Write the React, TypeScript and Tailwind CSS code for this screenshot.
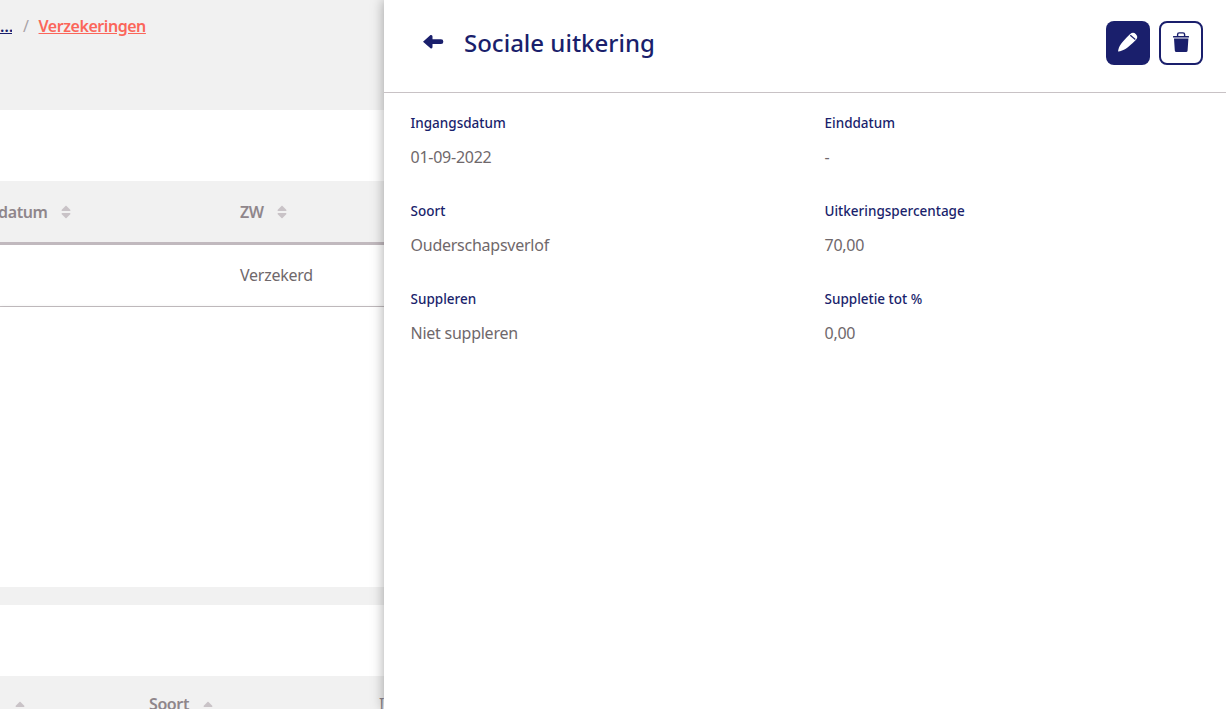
import { FaSort } from "react-icons/fa";

const font = { fontFamily: '"Noto Sans", sans-serif' };

function Field({ label, value }: { label: string; value: string }) {
  return (
    <div className="h-[88px]">
      <div className="h-[24px] text-[13.5px] leading-[24px] font-medium text-[#1a1f6c]">{label}</div>
      <div className="mt-[10px] h-[24px] text-[16px] leading-[24px] tracking-[-0.25px] text-[#6f686b]">{value}</div>
    </div>
  );
}

function SortIcon() {
  return <FaSort className="h-[16px] w-[10px] shrink-0 text-[#c9c3c7]" />;
}

function HeadCell({ label, className }: { label: string; className: string }) {
  return (
    <div className={`flex items-center gap-[13px] text-[16px] leading-[22px] font-semibold tracking-[-0.4px] text-[#8f868b] ${className}`}>
      <span>{label}</span>
      <SortIcon />
    </div>
  );
}

export default function App() {
  return (
    <div style={font} className="flex h-[709px] w-[1226px] overflow-hidden bg-white">
      <div className="flex w-[384px] shrink-0 flex-col overflow-hidden">
        <div className="flex h-[110px] shrink-0 items-start bg-[#f1f1f1] pt-[14px] text-[16px] leading-[24px] tracking-[-0.45px]">
          <a className="w-[12px] overflow-hidden font-semibold text-[#1a1f6c] underline">…</a>
          <span className="ml-[11px] text-[#a9a3a7]">/</span>
          <a className="ml-[10px] font-semibold text-[#fb665a] underline">Verzekeringen</a>
        </div>
        <div className="h-[71px] shrink-0" />
        <div className="flex h-[61px] shrink-0 items-center bg-[#f1f1f1]">
          <HeadCell label="Einddatum" className="ml-[-34px] w-[274px]" />
          <HeadCell label="ZW" className="" />
        </div>
        <div className="h-[3px] shrink-0 bg-[#c1b9be]" />
        <div className="flex h-[62px] shrink-0 items-center border-b border-[#c8c2c5] pb-[2px] pl-[240px] text-[16px] tracking-[-0.25px] text-[#6f686b]">
          Verzekerd
        </div>
        <div className="h-[280px] shrink-0 shadow-[0_1px_4px_rgba(0,0,0,0.2)]" />
        <div className="h-[18px] shrink-0 bg-[#f1f1f1]" />
        <div className="h-[71px] shrink-0" />
        <div className="flex h-[33px] shrink-0 items-start overflow-hidden bg-[#f1f1f1] pt-[17px]">
          <div className="ml-[15px] mt-[7px]"><SortIcon /></div>
          <div className="ml-[124px] flex items-start gap-[14px] text-[16px] leading-[22px] font-semibold tracking-[-0.4px] text-[#8f868b]">
            <span>Soort</span>
            <div className="mt-[7px]"><SortIcon /></div>
          </div>
          <span className="ml-[166px] text-[16px] leading-[22px] font-normal text-[#8f868b]">I</span>
        </div>
      </div>
      <div className="relative z-10 flex min-w-0 flex-1 flex-col bg-white shadow-[0_0_12px_rgba(0,0,0,0.35)]">
        <div className="flex h-[93px] shrink-0 items-start border-b border-[#c8c2c5] pl-[33px] pr-[23px] pt-[21px]">
          <svg viewBox="0 0 32 32" className="mt-[5px] h-[32px] w-[32px] shrink-0 text-[#1a1f6c]" fill="currentColor">
            <path d="M6 15.7 L13.5 9 Q15.5 8.5 15.5 10.5 V13.3 H24 A2.35 2.35 0 0 1 24 18 H15.5 V21 Q15.5 23 13.5 22.3 Z" />
          </svg>
          <h1 className="ml-[15px] text-[24px] leading-[44px] font-medium text-[#1a1f6c]">Sociale uitkering</h1>
          <button className="ml-auto flex h-[44px] w-[44px] items-center justify-center rounded-[8px] bg-[#1a1f6c] text-white">
            <svg viewBox="0 0 32 32" className="mb-[2px] h-[32px] w-[32px]" fill="currentColor">
              <path d="M6 25.5 C7 20 9 17 18.2 8.1 A4 4 0 0 1 23.8 13.9 C15 22.5 12 24.5 6 25.5 Z" />
              <path d="M18.3 9.3 L23.3 13.5" stroke="#1a1f6c" strokeWidth="1.2" fill="none" />
            </svg>
          </button>
          <button className="ml-[9px] flex h-[44px] w-[44px] items-center justify-center rounded-[8px] border-2 border-[#1a1f6c] text-[#1a1f6c]">
            <svg viewBox="0 0 32 32" className="mb-[2px] h-[32px] w-[32px]" fill="currentColor">
              <path d="M12.6 10.5 V8.5 Q12.6 6.9 14.2 6.9 H18 Q19.6 6.9 19.6 8.5 V10.5" fill="none" stroke="currentColor" strokeWidth="1.4" />
              <rect x="8" y="10" width="16" height="1.6" rx="0.4" />
              <path d="M9 12.6 H23.4 L22.6 24.5 Q22.5 26 21 26 H11.4 Q9.9 26 9.8 24.5 Z" />
            </svg>
          </button>
        </div>
        <div className="grid grid-cols-[414px_1fr] pl-[26.5px] pt-[18px]">
          <Field label="Ingangsdatum" value="01-09-2022" />
          <Field label="Einddatum" value="-" />
          <Field label="Soort" value="Ouderschapsverlof" />
          <Field label="Uitkeringspercentage" value="70,00" />
          <Field label="Suppleren" value="Niet suppleren" />
          <Field label="Suppletie tot %" value="0,00" />
        </div>
      </div>
    </div>
  );
}
